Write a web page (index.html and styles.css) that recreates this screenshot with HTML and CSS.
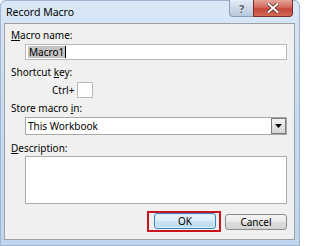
FILE: index.html
```html
<!DOCTYPE html>
<html>
<head>
<meta charset="utf-8">
<link rel="stylesheet" href="styles.css">
</head>
<body>
<div class="window">
  <div class="titlebar">
    <span class="title">Record Macro</span>
    <div class="caption">
      <span class="cbtn help">?</span>
      <span class="cbtn close">
        <svg width="12" height="10" viewBox="0 0 12 10">
          <path d="M1.5 1 L10.5 9 M10.5 1 L1.5 9" stroke="#5a2a26" stroke-width="3.4" stroke-linecap="square"/>
          <path d="M1.5 1 L10.5 9 M10.5 1 L1.5 9" stroke="#ffffff" stroke-width="2" stroke-linecap="square"/>
        </svg>
      </span>
    </div>
  </div>
  <div class="client">
    <div class="label first"><u>M</u>acro name:</div>
    <div class="field input"><span class="sel">Macro1</span><span class="caret"></span></div>
    <div class="label after-input">Shortcut <u>k</u>ey:</div>
    <div class="shortcut"><span class="ctrl">Ctrl+</span><span class="keybox"></span></div>
    <div class="label after-short">Store macro <u>i</u>n:</div>
    <div class="field select">
      <span class="seltext">This Workbook</span>
      <span class="drop">
        <svg width="7" height="4" viewBox="0 0 7 4"><path d="M0 0 H7 L3.5 4 Z" fill="#000"/></svg>
      </span>
    </div>
    <div class="label after-select"><u>D</u>escription:</div>
    <div class="field area"></div>
    <div class="buttons">
      <span class="focus"><span class="btn ok">OK</span></span>
      <span class="btn">Cancel</span>
    </div>
  </div>
</div>
</body>
</html>
```

FILE: styles.css
```css
html, body {
  margin: 0;
  padding: 0;
  background: #ffffff;
}
.window {
  width: 300px;
  height: 246px;
  box-sizing: border-box;
  padding: 0 5px 6px 4px;
  display: flex;
  flex-direction: column;
  background: linear-gradient(180deg, #dae8f7 0%, #c9dcf2 40%, #bfd5ef 100%);
  border-radius: 6px 6px 0 0;
  box-shadow: inset 0 0 0 1px #9fb6d1;
  font-family: "Segoe UI", "Noto Sans", "Open Sans", sans-serif;
  font-size: 10px;
  color: #000;
}
.titlebar {
  height: 23px;
  flex: none;
  display: flex;
  align-items: flex-start;
}
.title {
  margin: 5px 0 0 2px;
  font-size: 10.5px;
  line-height: 14px;
  color: #000;
}
.caption {
  margin-left: auto;
  margin-right: 2px;
  display: flex;
}
.cbtn {
  height: 17px;
  box-sizing: border-box;
  display: flex;
  align-items: center;
  justify-content: center;
}
.help {
  width: 24px;
  border: 1px solid #8a9db4;
  border-top: none;
  border-right: none;
  border-radius: 0 0 0 4px;
  background: linear-gradient(180deg, #e4edf7 0%, #cdd9e7 50%, #b9c9dc 100%);
  color: #4a5566;
  font-weight: bold;
  font-size: 11px;
  text-shadow: 0 0 2px #fff, 0 0 1px #fff;
  line-height: 1;
}
.close {
  width: 40px;
  border: 1px solid #7b2f28;
  border-top: none;
  border-radius: 0 0 4px 0;
  background: linear-gradient(180deg, #e6a298 0%, #d46a5d 45%, #c7473a 55%, #d16a55 100%);
}
.client {
  flex: 1;
  border: 1px solid #a0a0a0;
  background: #f0f0f0;
  padding: 4px 7px 0 6px;
  display: flex;
  flex-direction: column;
}
.label {
  line-height: 15px;
  height: 15px;
}
.label u {
  text-decoration: underline;
  text-underline-offset: 1px;
}
.field {
  margin-left: 14px;
  box-sizing: border-box;
  background: #fff;
  border: 1px solid #b9b9b9;
}
.input {
  margin-top: 1px;
  height: 16px;
  display: flex;
  align-items: center;
  padding-left: 2px;
}
.sel {
  background: #c3c3c3;
  line-height: 12px;
  padding: 0 1px;
}
.caret {
  width: 1px;
  height: 12px;
  background: #000;
}
.after-input {
  margin-top: 5px;
}
.shortcut {
  margin-top: 2px;
  padding-left: 41px;
  display: flex;
  align-items: center;
  height: 16px;
}
.ctrl {
  margin-right: 3px;
}
.keybox {
  width: 16px;
  height: 16px;
  box-sizing: border-box;
  background: #fff;
  border: 1px solid #b9b9b9;
}
.after-short {
  margin-top: 3px;
}
.select {
  margin-top: 1px;
  height: 18px;
  display: flex;
  align-items: center;
  padding: 0 0 0 2px;
  border-color: #a8a8a8;
}
.seltext {
  flex: 1;
}
.drop {
  width: 15px;
  height: 16px;
  box-sizing: border-box;
  border: 1px solid #7a7a7a;
  background: linear-gradient(180deg, #f2f2f2 0%, #e3e3e3 50%, #d6d6d6 100%);
  display: flex;
  align-items: center;
  justify-content: center;
}
.after-select {
  margin-top: 6px;
}
.area {
  height: 48px;
  border-color: #acacac;
}
.buttons {
  margin-top: 7px;
  display: flex;
  justify-content: flex-end;
  align-items: center;
  gap: 4px;
}
.focus {
  border: 2px solid #c8141e;
  padding: 0 3px 1px 5px;
  display: flex;
}
.btn {
  width: 62px;
  height: 16px;
  box-sizing: border-box;
  border: 1px solid #8a8a8a;
  border-radius: 3px;
  background: linear-gradient(180deg, #f4f4f4 0%, #ebebeb 50%, #dddddd 51%, #d4d4d4 100%);
  display: flex;
  align-items: center;
  justify-content: center;
  line-height: 1;
}
.ok {
  border-color: #3b88c4;
  background: linear-gradient(180deg, #eaf5fc 0%, #dcedf8 50%, #c9e3f4 51%, #bcdcf1 100%);
  box-shadow: inset 0 0 0 1px #d6ecfa;
}
```
